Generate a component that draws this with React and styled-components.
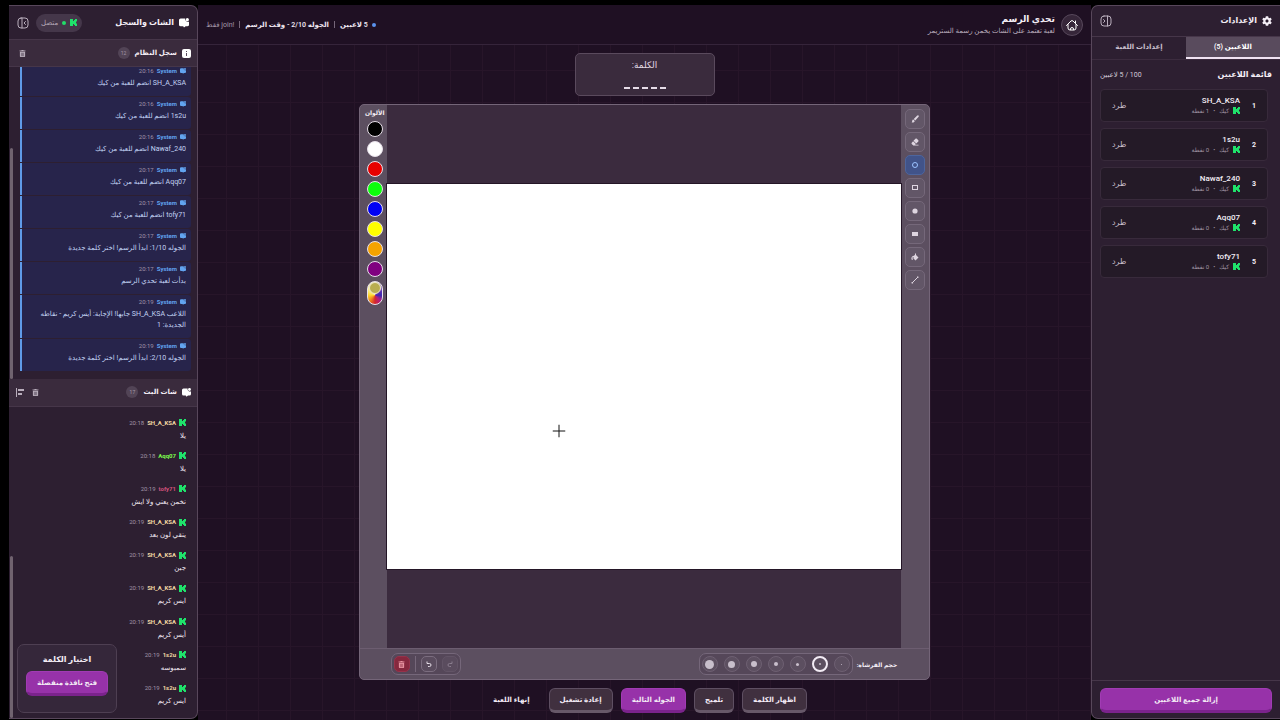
import React from "react";
import styled, { createGlobalStyle, css } from "styled-components";
import { FaTrashAlt, FaCog } from "react-icons/fa";

const GlobalStyle = createGlobalStyle`
  * { box-sizing: border-box; }
  html, body, #root { height: 100%; }
  body {
    margin: 0;
    background: #000;
    color: #f4eef6;
    font-family: Roboto, "DejaVu Sans", sans-serif;
    font-size: 7px;
    overflow: hidden;
  }
  button { font: inherit; color: inherit; padding: 0; margin: 0; cursor: pointer; }
  h1, h2, h3, p, ul, ol { margin: 0; padding: 0; font-size: inherit; }
  ul, ol { list-style: none; }
  svg { display: block; flex: none; }
`;

const Shell = styled.div`
  direction: rtl;
  height: 100vh;
  display: grid;
  grid-template-columns: 189px minmax(0, 1fr) 189px;
  padding: 5px 0 0 9px;
`;

const Panel = styled.aside`
  position: relative;
  display: flex;
  flex-direction: column;
  min-height: 0;
  margin-bottom: 1px;
  background: #2d1f31;
  border: 1px solid #58475b;
  border-radius: ${(p) => (p.$side === "right" ? "0 7px 7px 0" : "7px 0 0 7px")};
  ${(p) => (p.$side === "right" ? "border-left: 0;" : "border-right: 0;")}
  overflow: hidden;
`;

const PanelHeader = styled.header`
  display: flex;
  align-items: center;
  justify-content: space-between;
  height: ${(p) => p.$height}px;
  padding: 0 8px;
  flex: none;
  border-bottom: 1px solid #463649;
`;

const PanelTitle = styled.h2`
  display: flex;
  align-items: center;
  gap: 5px;
  font-size: ${(p) => p.$size || 8}px;
  line-height: 16px;
  font-weight: 700;
  white-space: nowrap;
`;

const Cluster = styled.div`
  display: flex;
  align-items: center;
  gap: ${(p) => p.$gap || 7}px;
`;

const IconButton = styled.button`
  display: grid;
  place-items: center;
  border: 0;
  background: none;
  color: #b9aebc;
`;

/* settings panel */
const Tabs = styled.div`
  display: grid;
  grid-template-columns: 1fr 1fr;
  height: 23px;
  flex: none;
  border-bottom: 1px solid #3c2c3f;
`;

const Tab = styled.button`
  border: 0;
  background: ${(p) => (p.$active ? "#594b5d" : "transparent")};
  border-bottom: 2px solid ${(p) => (p.$active ? "#f1e3f3" : "transparent")};
  color: ${(p) => (p.$active ? "#fff" : "#c9bfcc")};
  font-size: 7px;
  font-weight: 600;
`;

const PlayersHead = styled.div`
  display: flex;
  align-items: center;
  justify-content: space-between;
  height: 29px;
  flex: none;
  padding: 0 8px;
`;

const Count = styled.span`
  font-size: 7px;
  color: #d5cbd8;
`;

const PlayerList = styled.ol`
  display: flex;
  flex-direction: column;
  gap: 6px;
  flex: 1;
  padding: 0 12px 0 8px;
`;

const PlayerCard = styled.li`
  display: flex;
  align-items: center;
  height: 33px;
  padding: 0 11px;
  gap: 11px;
  border: 1px solid #382a3b;
  border-radius: 4px;
  background: #241a27;
`;

const Rank = styled.b`
  font-size: 7px;
  width: 5px;
`;

const PlayerInfo = styled.div`
  flex: 1;
`;

const PlayerName = styled.div`
  font-size: 8px;
  line-height: 10px;
  font-weight: 500;
`;

const PlayerMeta = styled.div`
  display: flex;
  align-items: center;
  gap: 4px;
  font-size: 6px;
  line-height: 10px;
  color: #a094a3;
`;

const KickOut = styled.button`
  border: 0;
  background: none;
  color: #c9bfcc;
  font-size: 8px;
`;

const PanelFooter = styled.footer`
  border-top: 1px solid #463649;
  padding: 7px 8px 5px;
`;

const raised = css`
  border: 1px solid ${(p) => (p.$primary ? "#a13bb4" : "#5e4f62")};
  border-bottom: 3px solid ${(p) => (p.$primary ? "#7b238c" : "#675869")};
  background: ${(p) => (p.$primary ? "#9732a9" : "#40303f")};
  border-radius: 6px;
  color: #f3eaf5;
  font-size: 7px;
  font-weight: 600;
  white-space: nowrap;
`;

const WideButton = styled.button`
  ${raised}
  display: block;
  width: 100%;
  height: 25px;
`;

/* centre */
const Main = styled.main`
  display: flex;
  flex-direction: column;
  align-items: center;
  gap: 8px;
  min-width: 0;
  padding-bottom: 7px;
  background-color: #1f1023;
  background-image:
    linear-gradient(to right, #271529 1px, transparent 1px),
    linear-gradient(to bottom, #271529 1px, transparent 1px);
  background-size: 32px 32px;
  background-position: right 1px top 1px;
`;

const TopBar = styled.header`
  align-self: stretch;
  height: 40px;
  flex: none;
  display: flex;
  align-items: center;
  justify-content: space-between;
  padding: 0 8px;
  background: #1f1023;
  border-bottom: 1px solid #35243a;
`;

const HomeButton = styled.button`
  width: 22px;
  height: 22px;
  display: grid;
  place-items: center;
  border: 1px solid #57485b;
  border-radius: 50%;
  background: #362639;
`;

const GameTitle = styled.h1`
  font-size: 9px;
  line-height: 12px;
  font-weight: 700;
`;

const GameSub = styled.p`
  font-size: 7px;
  line-height: 12px;
  color: #b9adbc;
`;

const Status = styled.div`
  display: flex;
  align-items: center;
  gap: 4px;
  font-size: 7px;
  font-weight: ${(p) => (p.$soft ? 400 : 600)};
  color: ${(p) => (p.$soft ? "#a598a9" : "#eee6f0")};
`;

const Dot = styled.i`
  width: 4px;
  height: 4px;
  border-radius: 50%;
  background: ${(p) => p.$color};
`;

const Bar = styled.i`
  width: 1px;
  height: ${(p) => p.$height || 7}px;
  background: #76677a;
`;

const WordBox = styled.section`
  width: 140px;
  height: 43px;
  flex: none;
  display: flex;
  flex-direction: column;
  align-items: center;
  justify-content: space-between;
  padding: 5px 0 6px;
  border: 1px solid #5a4a5d;
  border-radius: 5px;
  background: #3a2b3d;
  font-size: 9px;
  line-height: 12px;
  color: #e4dbe6;
`;

const Blanks = styled.div`
  display: flex;
  gap: 3px;
`;

const Blank = styled.i`
  width: 6px;
  height: 2px;
  background: #e6dce8;
`;

const Studio = styled.section`
  width: 64%;
  flex: 1;
  min-height: 0;
  display: grid;
  grid-template-columns: 28px minmax(0, 1fr) 27px;
  grid-template-rows: minmax(0, 1fr) 31px;
  border: 1px solid #746578;
  border-radius: 5px;
  background: #5c4f60;
  overflow: hidden;
`;

const Tools = styled.div`
  display: flex;
  flex-direction: column;
  align-items: center;
  gap: 3px;
  padding-top: 4px;
`;

const Tool = styled.button`
  width: 20px;
  height: 20px;
  display: grid;
  place-items: center;
  border: 1px solid ${(p) => (p.$active ? "#4d659d" : "#75687a")};
  border-radius: 5px;
  background: ${(p) => (p.$active ? "#415389" : "#625667")};
  color: ${(p) => (p.$active ? "#9cc4ff" : "#ded5e0")};
`;

const Stage = styled.div`
  position: relative;
  display: flex;
  align-items: center;
  background: #3b2b3e;
`;

const Board = styled.div`
  width: 100%;
  aspect-ratio: 4 / 3;
  background: #fff;
  outline: 1px solid #241627;
`;

const Cursor = styled.svg`
  position: absolute;
  left: 33.5%;
  top: 60%;
  transform: translate(-50%, -50%);
`;

const Palette = styled.div`
  display: flex;
  flex-direction: column;
  align-items: center;
  gap: 4px;
  padding-top: 3px;
  padding-left: 3px;
  font-size: 6px;
  font-weight: 700;
  line-height: 9px;
  white-space: nowrap;
`;

const Swatch = styled.button`
  width: 16px;
  height: 16px;
  flex: none;
  border: 1px solid #e7dfe9;
  border-radius: 50%;
  background: ${(p) => p.$color};
`;

const CustomSwatch = styled.button`
  width: 16px;
  height: 24px;
  border: 1px solid #eae2ec;
  border-radius: 8px;
  background: conic-gradient(from 0deg at 50% 60%, #e9e9c0, #5a2fb4 60deg, #3a2bb0 90deg, #b01c86 135deg, #d3262e 180deg, #f08a1c 225deg, #ffd72e 270deg, #fbf6a0 320deg, #e9e9c0);
`;

const Picked = styled.i`
  display: block;
  width: 12px;
  height: 12px;
  margin: -10px auto 0;
  border: 1px solid #efe8c8;
  border-radius: 50%;
  background: #b9ad4f;
`;

const BottomBar = styled.div`
  grid-column: 1 / -1;
  display: flex;
  align-items: center;
  justify-content: space-between;
  padding: 0 32px 0 31px;
  border-top: 1px solid #6c5d70;
  font-size: 6px;
  font-weight: 600;
`;

const Capsule = styled.div`
  display: flex;
  align-items: center;
  gap: ${(p) => p.$gap}px;
  height: 22px;
  padding: 0 2px;
  border: 1px solid #75677a;
  border-radius: 7px;
  background: #554759;
`;

const SizeButton = styled.button`
  width: 16px;
  height: 16px;
  display: grid;
  place-items: center;
  border: ${(p) => (p.$active ? "2px solid #f2ebf4" : "1px solid #6e6072")};
  border-radius: 50%;
  background: #5c4f60;
  &::before {
    content: "";
    width: ${(p) => p.$dot}px;
    height: ${(p) => p.$dot}px;
    border-radius: 50%;
    background: #c8bfcb;
  }
`;

const HistoryButton = styled.button`
  width: 16px;
  height: 16px;
  display: grid;
  place-items: center;
  border: 1px solid ${(p) => (p.$danger ? "#96324a" : p.disabled ? "#625466" : "#7b6d7f")};
  border-radius: 5px;
  background: ${(p) => (p.$danger ? "#86283e" : "#5a4c5e")};
  color: ${(p) => (p.$danger ? "#e893a1" : p.disabled ? "#897c8d" : "#e5dde7")};
`;

const Actions = styled.div`
  display: flex;
  gap: 8px;
  height: 25px;
  flex: none;
`;

const ActionButton = styled.button`
  ${raised}
  padding: 0 10px;
  ${(p) => p.$plain && "border-color: transparent; background: none;"}
`;

/* chat panel */
const Connected = styled.span`
  display: flex;
  align-items: center;
  gap: 4px;
  height: 18px;
  padding: 0 5px;
  border-radius: 9px;
  background: #45374a;
  color: #b5a9b8;
  font-size: 7px;
`;

const SubHeader = styled(PanelHeader)`
  background: #3a2b3d;
  padding: 0 6px 0 ${(p) => p.$end}px;
`;

const Badge = styled.span`
  min-width: 12px;
  height: 12px;
  border-radius: 6px;
  background: #524456;
  color: #a598a9;
  font-size: 5px;
  line-height: 12px;
  font-weight: 400;
  text-align: center;
`;

const Scroller = styled.div`
  position: relative;
  flex: 1 1 0;
  min-height: 0;
  overflow: hidden;
  display: flex;
  flex-direction: column;
  &::after {
    content: "";
    position: absolute;
    left: 1px;
    bottom: 0;
    width: 3px;
    height: ${(p) => p.$thumb}%;
    border-radius: 2px;
    background: #70636f;
  }
`;

const Log = styled.ul`
  flex: 1;
  min-height: 0;
  display: flex;
  flex-direction: column;
  justify-content: flex-end;
  gap: 1px;
  padding: 0 6px 8px 11px;
`;

const LogItem = styled.li`
  flex: none;
  padding: 2px 5px 7px 8px;
  border-left: 2px solid #5f9be8;
  border-radius: 0 3px 3px 0;
  background: #27244b;
`;

const Line = styled.div`
  display: flex;
  align-items: center;
  gap: 3px;
  height: 10px;
  margin-bottom: 2px;
`;

const Author = styled.b`
  font-size: 6px;
  line-height: 10px;
  color: ${(p) => p.$color};
`;

const Time = styled.time`
  font-size: 6px;
  line-height: 10px;
  color: #a195a8;
`;

const LogText = styled.p`
  font-size: 7px;
  line-height: 11px;
  color: #c2d3f4;
`;

const Messages = styled.ul`
  flex: 1;
  min-height: 0;
  display: flex;
  flex-direction: column;
  justify-content: space-between;
  padding: 11px 11px 10px 8px;
`;

const ChatText = styled.p`
  font-size: 7px;
  line-height: 13px;
  color: #f0e8f2;
`;

const WordPicker = styled.section`
  position: absolute;
  left: 8px;
  bottom: 5px;
  width: 100px;
  height: 69px;
  padding: 8px;
  border: 1px solid #4e3f52;
  border-radius: 7px;
  background: #35273a;
  text-align: center;
`;

const PickerTitle = styled.h3`
  font-size: 8px;
  line-height: 14px;
  margin-bottom: 4px;
`;

const KickLogo = () => (
  <svg width="7" height="7" viewBox="0 0 7 7" fill="#1fe36b" aria-hidden="true">
    <path d="M0 0h3v2h1V1h1V0h2v2.500H6v2h1V7H5V6H4V5H3v2H0z" />
  </svg>
);

const BubbleIcon = ({ size = 9, color = "#fff" }) => (
  <svg width={size} height={size} viewBox="0 0 24 24" fill={color} aria-hidden="true">
    <path d="M4 1h11v4l4 4h5v7a4 4 0 0 1-4 4h-4l-4 3-2-3H4a4 4 0 0 1-4-4V5a4 4 0 0 1 4-4z" />
    <circle cx="20" cy="4" r="3.8" />
  </svg>
);

const InfoIcon = () => (
  <svg width="9" height="9" viewBox="0 0 9 9" aria-hidden="true">
    <rect width="9" height="9" rx="2" fill="#fff" />
    <path d="M4 2h1v1H4zM4 4h1v3H4z" fill="#5a4b5e" />
  </svg>
);

const CollapseIcon = ({ flip }) => (
  <svg width="12" height="12" viewBox="0 0 24 24" fill="none" stroke="currentColor" strokeWidth="2" strokeLinecap="round" strokeLinejoin="round" aria-hidden="true">
    <rect x="2" y="2" width="20" height="20" rx="6" />
    {flip ? <path d="M15 2v20M7 9l3 3-3 3" /> : <path d="M10 2v20M17 9l-3 3 3 3" />}
  </svg>
);

const HomeIcon = () => (
  <svg width="12" height="12" viewBox="0 0 24 24" fill="none" stroke="#fff" strokeWidth="2" strokeLinecap="round" strokeLinejoin="round" aria-hidden="true">
    <path d="M1 13 10 4a3 3 0 0 1 4 0l9 9M19 4v4M4 11v7a4 4 0 0 0 4 4h8a4 4 0 0 0 4-4v-7M9 21v-1a3 3 0 0 1 6 0v1" />
  </svg>
);

const AlignIcon = () => (
  <svg width="9" height="9" viewBox="0 0 9 9" fill="currentColor" aria-hidden="true">
    <path d="M0 0h1v9H0zM2 1h6v2H2zM2 5h4v2H2z" />
  </svg>
);

const Shape = ({ children }) => (
  <svg width="8" height="8" viewBox="0 0 8 8" fill="none" stroke="currentColor" aria-hidden="true">
    {children}
  </svg>
);

const Glyph = ({ d }) => (
  <svg width="8" height="8" viewBox="0 0 16 16" fill="currentColor" aria-hidden="true">
    <path d={d} />
  </svg>
);

const TurnIcon = ({ flip }) => (
  <svg width="6" height="6" viewBox="0 0 12 12" fill="none" stroke="currentColor" strokeWidth="2" aria-hidden="true">
    {flip ? <path d="M10 1v4H6M10 5H5a3 3 0 0 0 0 6h3" /> : <path d="M2 1v4h4M2 5h5a3 3 0 0 1 0 6H4" />}
  </svg>
);

const tools = [
  ["فرشاة", <Glyph d="M15 1c1 1 .6 2-.2 3L8.500 11 5.500 8 12 1.400C13 .4 14 0 15 1zM4.600 9l2.800 2.800C7 14.500 4.500 15.500 1 15c1.500-1 1-2 1.400-3.600C2.700 10 3.600 9.200 4.600 9z" />],
  ["ممحاة", <Glyph d="M9 1.500c.8-.8 1.800-.8 2.600 0l3 3c.8.800.8 1.800 0 2.600L10.500 11.200 5 5.600zM4.200 6.400l5.500 5.600-1.700 1.700H15V15H4.500L1.500 12c-.8-.8-.8-1.800 0-2.600z" />],
  ["دائرة", <Shape><circle cx="4" cy="4" r="2.5" /></Shape>],
  ["مستطيل", <Shape><rect x="1.500" y="1.500" width="5" height="4" /></Shape>],
  ["دائرة ممتلئة", <Shape><circle cx="4" cy="4" r="2.600" fill="currentColor" stroke="none" /></Shape>],
  ["مستطيل ممتلئ", <Shape><rect x="1" y="2" width="6" height="4" fill="currentColor" stroke="none" /></Shape>],
  ["تعبئة", <Glyph d="M8 1h2v3l5 5-6 6-4-4V8c-1.500 0-2 1-2 2.500C4.500 13 3.500 14 2.500 14S.5 13 .8 11C1 7.500 3 5.500 6 5.500l2-2z" />],
  ["خط", <Shape><path d="M1.500 6.500l5-5" /><path d="M.6 6h1.500v1.500H.6zM6 .6h1.400v1.400H6z" fill="currentColor" stroke="none" /></Shape>],
];

const colors = ["#000", "#fff", "#e80000", "#0cff0c", "#0000f5", "#ffff00", "#f5a300", "#800080"];
const brushDots = [1, 2, 3, 4, 6, 7, 9];

const players = [
  ["SH_A_KSA", 1],
  ["1s2u", 0],
  ["Nawaf_240", 0],
  ["Aqq07", 0],
  ["tofy71", 0],
];

const log = [
  ["20:16", "SH_A_KSA انضم للعبة من كيك"],
  ["20:16", "1s2u انضم للعبة من كيك"],
  ["20:16", "Nawaf_240 انضم للعبة من كيك"],
  ["20:17", "Aqq07 انضم للعبة من كيك"],
  ["20:17", "tofy71 انضم للعبة من كيك"],
  ["20:17", "الجوله 1/10: ابدأ الرسم! اختر كلمة جديدة"],
  ["20:17", "بدأت لعبة تحدي الرسم"],
  ["20:19", "اللاعب SH_A_KSA جابها! الإجابة: أيس كريم - نقاطه الجديدة: 1"],
  ["20:19", "الجوله 2/10: ابدأ الرسم! اختر كلمة جديدة"],
];

const cream = "#f3d9a4";
const chat = [
  ["SH_A_KSA", cream, "20:18", "يلا"],
  ["Aqq07", "#7dfb4d", "20:18", "يلا"],
  ["tofy71", "#d2527c", "20:19", "نخمن يعني ولا ايش"],
  ["SH_A_KSA", cream, "20:19", "ينقي لون بعد"],
  ["SH_A_KSA", cream, "20:19", "جبن"],
  ["SH_A_KSA", cream, "20:19", "ايس كريم"],
  ["SH_A_KSA", cream, "20:19", "أيس كريم"],
  ["1s2u", cream, "20:19", "سمبوسه"],
  ["1s2u", cream, "20:19", "ايس كريم"],
];

function SettingsPanel() {
  return (
    <Panel $side="left">
      <PanelHeader $height={31}>
        <PanelTitle><FaCog size={10} />الإعدادات</PanelTitle>
        <IconButton aria-label="طي الإعدادات"><CollapseIcon flip /></IconButton>
      </PanelHeader>
      <Tabs>
        <Tab $active>اللاعبين (5)</Tab>
        <Tab>إعدادات اللعبة</Tab>
      </Tabs>
      <PlayersHead>
        <PanelTitle>قائمة اللاعبين</PanelTitle>
        <Count>100 / 5 لاعبين</Count>
      </PlayersHead>
      <PlayerList>
        {players.map(([name, points], i) => (
          <PlayerCard key={name}>
            <Rank>{i + 1}</Rank>
            <PlayerInfo>
              <PlayerName>{name}</PlayerName>
              <PlayerMeta><KickLogo /><span>كيك</span><span>•</span><span>{points} نقطة</span></PlayerMeta>
            </PlayerInfo>
            <KickOut>طرد</KickOut>
          </PlayerCard>
        ))}
      </PlayerList>
      <PanelFooter><WideButton $primary>إزالة جميع اللاعبين</WideButton></PanelFooter>
    </Panel>
  );
}

function ChatPanel() {
  return (
    <Panel $side="right">
      <PanelHeader $height={34}>
        <PanelTitle><BubbleIcon size={10} />الشات والسجل</PanelTitle>
        <Cluster>
          <Connected><KickLogo /><Dot $color="#22dd69" /><span>متصل</span></Connected>
          <IconButton aria-label="طي الشات"><CollapseIcon /></IconButton>
        </Cluster>
      </PanelHeader>
      <SubHeader $height={27} $end={10}>
        <PanelTitle $size={7}><InfoIcon />سجل النظام<Badge>12</Badge></PanelTitle>
        <IconButton aria-label="مسح السجل"><FaTrashAlt size={7} /></IconButton>
      </SubHeader>
      <Scroller $thumb={74}>
        <Log>
          {log.map(([time, text]) => (
            <LogItem key={text}>
              <Line><BubbleIcon size={6} color="#62a4f0" /><Author $color="#62a4f0">System</Author><Time>{time}</Time></Line>
              <LogText>{text}</LogText>
            </LogItem>
          ))}
        </Log>
      </Scroller>
      <SubHeader $height={28} $end={7}>
        <PanelTitle $size={7}><BubbleIcon />شات البث<Badge>17</Badge></PanelTitle>
        <Cluster>
          <IconButton aria-label="مسح الشات"><FaTrashAlt size={7} /></IconButton>
          <IconButton aria-label="محاذاة"><AlignIcon /></IconButton>
        </Cluster>
      </SubHeader>
      <Scroller $thumb={52}>
        <Messages>
          {chat.map(([name, color, time, text], i) => (
            <li key={i}>
              <Line><KickLogo /><Author $color={color}>{name}</Author><Time>{time}</Time></Line>
              <ChatText>{text}</ChatText>
            </li>
          ))}
        </Messages>
      </Scroller>
      <WordPicker>
        <PickerTitle>اختيار الكلمة</PickerTitle>
        <WideButton $primary>فتح نافذة منفصلة</WideButton>
      </WordPicker>
    </Panel>
  );
}

export default function App() {
  return (
    <>
      <GlobalStyle />
      <Shell>
        <SettingsPanel />
        <Main>
          <TopBar>
            <Cluster $gap={6}>
              <HomeButton aria-label="الرئيسية"><HomeIcon /></HomeButton>
              <div>
                <GameTitle>تحدي الرسم</GameTitle>
                <GameSub>لعبة تعتمد على الشات يخمن رسمة الستريمر</GameSub>
              </div>
            </Cluster>
            <Cluster $gap={5}>
              <Status><Dot $color="#5b93ee" />5 لاعبين</Status>
              <Bar />
              <Status>الجوله 2/10 - وقت الرسم</Status>
              <Bar />
              <Status $soft>!join فقط</Status>
            </Cluster>
          </TopBar>
          <WordBox>
            <span>الكلمة:</span>
            <Blanks>{[0, 1, 2, 3, 4].map((n) => <Blank key={n} />)}</Blanks>
          </WordBox>
          <Studio>
            <Tools>
              {tools.map(([label, icon], i) => (
                <Tool key={label} aria-label={label} $active={i === 2}>{icon}</Tool>
              ))}
            </Tools>
            <Stage>
              <Board />
              <Cursor width="13" height="13" viewBox="0 0 13 13" stroke="#111" aria-hidden="true">
                <path d="M6.500 0v13M0 6.500h13" />
              </Cursor>
            </Stage>
            <Palette>
              <span>الألوان</span>
              {colors.map((c) => <Swatch key={c} $color={c} aria-label={c} />)}
              <CustomSwatch aria-label="لون مخصص"><Picked /></CustomSwatch>
            </Palette>
            <BottomBar>
              <Cluster $gap={4}>
                <span>حجم الفرشاة:</span>
                <Capsule $gap={6}>
                  {brushDots.map((d, i) => <SizeButton key={d} $dot={d} $active={i === 1} aria-label={`${d}`} />)}
                </Capsule>
              </Cluster>
              <Capsule $gap={5}>
                <HistoryButton disabled aria-label="إعادة"><TurnIcon flip /></HistoryButton>
                <HistoryButton aria-label="تراجع"><TurnIcon /></HistoryButton>
                <Bar $height={16} />
                <HistoryButton $danger aria-label="مسح اللوحة"><FaTrashAlt size={7} /></HistoryButton>
              </Capsule>
            </BottomBar>
          </Studio>
          <Actions>
            <ActionButton>اظهار الكلمة</ActionButton>
            <ActionButton>تلميح</ActionButton>
            <ActionButton $primary>الجوله التالية</ActionButton>
            <ActionButton>إعادة تشغيل</ActionButton>
            <ActionButton $plain>إنهاء اللعبة</ActionButton>
          </Actions>
        </Main>
        <ChatPanel />
      </Shell>
    </>
  );
}
